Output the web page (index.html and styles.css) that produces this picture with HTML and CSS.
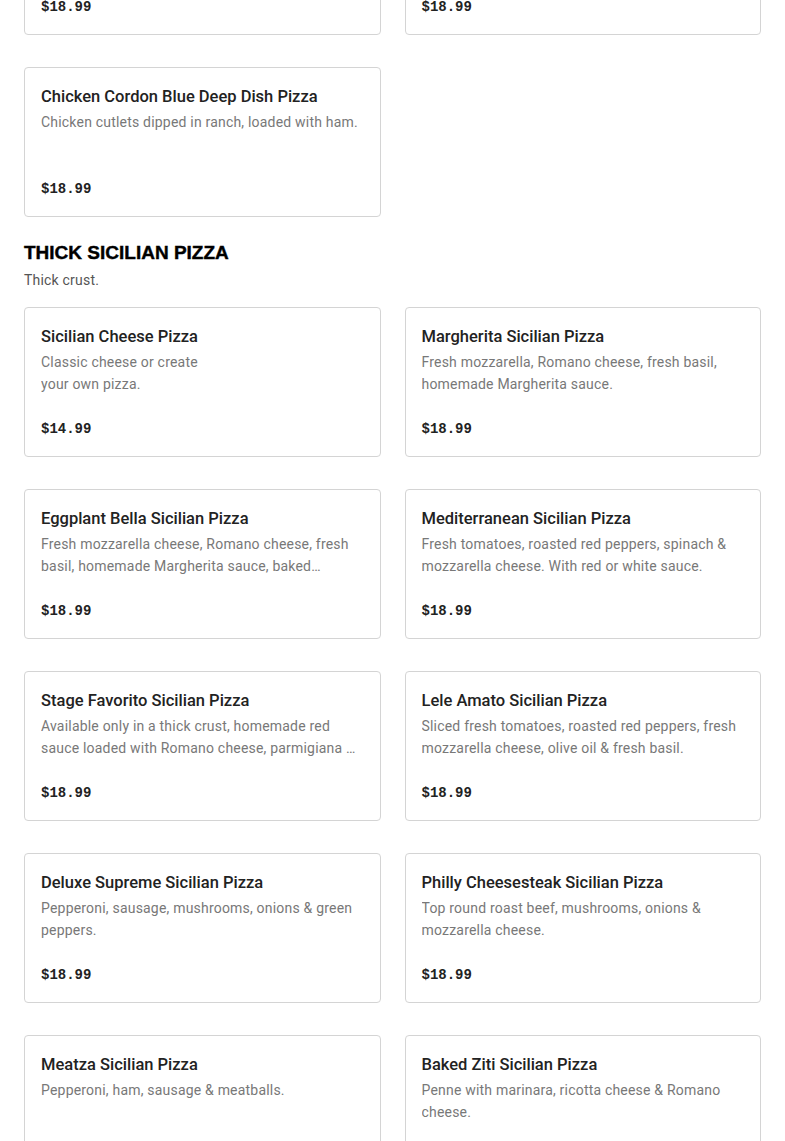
FILE: index.html
```html
<!DOCTYPE html>
<html>
<head>
<meta charset="utf-8">
<link rel="stylesheet" href="styles.css">
</head>
<body>
<main class="menu">
  <section class="section">
    <div class="grid grid-top">
      <div class="card">
        <h3 class="title">Chicken Bacon Ranch Deep Dish Pizza</h3>
        <p class="desc">Grilled chicken, bacon and ranch dressing.</p>
        <div class="price">$18.99</div>
      </div>
      <div class="card">
        <h3 class="title">Buffalo Chicken Deep Dish Pizza</h3>
        <p class="desc">Chicken cutlets dipped in buffalo sauce.</p>
        <div class="price">$18.99</div>
      </div>
      <div class="card">
        <h3 class="title">Chicken Cordon Blue Deep Dish Pizza</h3>
        <p class="desc">Chicken cutlets dipped in ranch, loaded with ham.</p>
        <div class="price">$18.99</div>
      </div>
    </div>
  </section>

  <section class="section">
    <h2 class="section-title">THICK SICILIAN PIZZA</h2>
    <p class="section-sub">Thick crust.</p>
    <div class="grid">
      <div class="card">
        <h3 class="title">Sicilian Cheese Pizza</h3>
        <p class="desc">Classic cheese or create<br>your own pizza.</p>
        <div class="price">$14.99</div>
      </div>
      <div class="card">
        <h3 class="title">Margherita Sicilian Pizza</h3>
        <p class="desc">Fresh mozzarella, Romano cheese, fresh basil, homemade Margherita sauce.</p>
        <div class="price">$18.99</div>
      </div>
      <div class="card">
        <h3 class="title">Eggplant Bella Sicilian Pizza</h3>
        <p class="desc">Fresh mozzarella cheese, Romano cheese, fresh basil, homemade Margherita sauce, baked eggplant &amp; ricotta cheese.</p>
        <div class="price">$18.99</div>
      </div>
      <div class="card">
        <h3 class="title">Mediterranean Sicilian Pizza</h3>
        <p class="desc">Fresh tomatoes, roasted red peppers, spinach &amp; mozzarella cheese. With red or white sauce.</p>
        <div class="price">$18.99</div>
      </div>
      <div class="card">
        <h3 class="title">Stage Favorito Sicilian Pizza</h3>
        <p class="desc">Available only in a thick crust, homemade red sauce loaded with Romano cheese, parmigiana &amp; fresh basil.</p>
        <div class="price">$18.99</div>
      </div>
      <div class="card">
        <h3 class="title">Lele Amato Sicilian Pizza</h3>
        <p class="desc">Sliced fresh tomatoes, roasted red peppers, fresh mozzarella cheese, olive oil &amp; fresh basil.</p>
        <div class="price">$18.99</div>
      </div>
      <div class="card">
        <h3 class="title">Deluxe Supreme Sicilian Pizza</h3>
        <p class="desc">Pepperoni, sausage, mushrooms, onions &amp; green peppers.</p>
        <div class="price">$18.99</div>
      </div>
      <div class="card">
        <h3 class="title">Philly Cheesesteak Sicilian Pizza</h3>
        <p class="desc">Top round roast beef, mushrooms, onions &amp; mozzarella cheese.</p>
        <div class="price">$18.99</div>
      </div>
      <div class="card">
        <h3 class="title">Meatza Sicilian Pizza</h3>
        <p class="desc">Pepperoni, ham, sausage &amp; meatballs.</p>
        <div class="price">$18.99</div>
      </div>
      <div class="card">
        <h3 class="title">Baked Ziti Sicilian Pizza</h3>
        <p class="desc">Penne with marinara, ricotta cheese &amp; Romano cheese.</p>
        <div class="price">$18.99</div>
      </div>
    </div>
  </section>
</main>
</body>
</html>
```

FILE: styles.css
```css
* { box-sizing: border-box; }
html, body { margin: 0; padding: 0; background: #fff; }
body { font-family: "Roboto", "Liberation Sans", sans-serif; color: #222; }
.menu { padding: 0 24px; }
.grid {
  display: grid;
  grid-template-columns: 1fr 1fr;
  column-gap: 24px;
  row-gap: 32px;
}
.grid-top { margin-top: -115px; }
.section-title {
  margin: 24px 0 0;
  font-family: "Liberation Sans", sans-serif;
  font-weight: 900;
  font-size: 19px;
  line-height: 24px;
  color: #000;
  -webkit-text-stroke: 0.4px #000;
}
.section-sub {
  margin: 4px 0 16px;
  font-size: 14px;
  line-height: 22px;
  letter-spacing: 0.2px;
  color: #555;
}
.card {
  height: 150px;
  border: 1px solid #d4d4d4;
  border-radius: 4px;
  padding: 16px;
  display: flex;
  flex-direction: column;
}
.title {
  margin: 0;
  padding-top: 1px;
  font-size: 16.5px;
  font-weight: 500;
  line-height: 24px;
  color: #222;
}
.desc {
  margin: 2px 0 0;
  font-size: 14px;
  line-height: 22px;
  letter-spacing: 0.2px;
  color: #787878;
  display: -webkit-box;
  -webkit-line-clamp: 2;
  -webkit-box-orient: vertical;
  overflow: hidden;
  height: 44px;
}
.price {
  margin-top: auto;
  font-family: "Liberation Mono", monospace;
  font-weight: 700;
  font-size: 14px;
  line-height: 22px;
  color: #222;
}
```
